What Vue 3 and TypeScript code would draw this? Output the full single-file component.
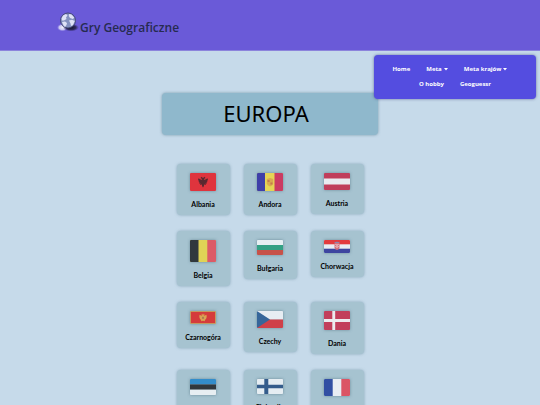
<script setup lang="ts">
interface Country {
  name: string
  code: string
  height: number
}

interface MenuLink {
  label: string
  dropdown?: boolean
}

const menu: MenuLink[][] = [
  [{ label: 'Home' }, { label: 'Meta', dropdown: true }, { label: 'Meta krajów', dropdown: true }],
  [{ label: 'O hobby' }, { label: 'Geoguessr' }],
]

const countries: Country[] = [
  { name: 'Albania', code: 'al', height: 18 },
  { name: 'Andora', code: 'ad', height: 18 },
  { name: 'Austria', code: 'at', height: 17 },
  { name: 'Belgia', code: 'be', height: 22 },
  { name: 'Bułgaria', code: 'bg', height: 15 },
  { name: 'Chorwacja', code: 'hr', height: 13 },
  { name: 'Czarnogóra', code: 'me', height: 13 },
  { name: 'Czechy', code: 'cz', height: 17 },
  { name: 'Dania', code: 'dk', height: 19 },
  { name: 'Estonia', code: 'ee', height: 16 },
  { name: 'Finlandia', code: 'fi', height: 15 },
  { name: 'Francja', code: 'fr', height: 17 },
]
</script>

<template>
  <div class="page">
    <header class="header">
      <a class="brand" href="#">
        <svg class="globe" viewBox="0 0 22 20" aria-hidden="true">
          <defs>
            <radialGradient id="globe-shadow">
              <stop offset="0" stop-color="#11112a" />
              <stop offset="0.6" stop-color="#25224a" stop-opacity="0.85" />
              <stop offset="1" stop-color="#3c3580" stop-opacity="0" />
            </radialGradient>
            <radialGradient id="globe-glow">
              <stop offset="0" stop-color="#f2f2fc" />
              <stop offset="0.6" stop-color="#d5d3f5" stop-opacity="0.9" />
              <stop offset="1" stop-color="#a9a2ea" stop-opacity="0" />
            </radialGradient>
          </defs>
          <ellipse cx="5.500" cy="15.500" rx="5.500" ry="3.800" fill="url(#globe-glow)" />
          <ellipse cx="14" cy="15.500" rx="8" ry="4" fill="url(#globe-shadow)" />
          <circle cx="11" cy="8.500" r="7.500" fill="#8491c0" stroke="#3a3c66" stroke-width="0.800" />
          <path d="M4.500 6.500 L6 3.500 L9 2 L10.500 3.500 L9 5.500 L9.500 7 L7 8.500 L5 8.500Z M5 10 L8 9.500 L10 11 L9.500 13 L8 15 L6.500 13.500Z M12 2 L14.500 2.500 L17.200 5.500 L16 7 L13 6 L11.800 4Z M12 8.500 L15 7.800 L17.800 9 L16 13 L14 14 L13.500 11.500Z" fill="#dfe2f6" />
        </svg>
        <span>Gry Geograficzne</span>
      </a>
    </header>

    <nav class="menu" aria-label="Menu">
      <div v-for="(row, i) in menu" :key="i" class="menu-row">
        <a v-for="link in row" :key="link.label" href="#" class="menu-link">
          {{ link.label }}<svg v-if="link.dropdown" class="caret" viewBox="0 0 4 3" aria-hidden="true"><path d="M0 0H4L2 2.500Z" /></svg>
        </a>
      </div>
    </nav>

    <main class="content">
      <h1 class="title">EUROPA</h1>
      <div class="grid">
        <a v-for="c in countries" :key="c.code" href="#" class="card">
          <svg class="flag" :viewBox="`0 0 26 ${c.height}`" :style="{ height: `${c.height}px` }" aria-hidden="true">
            <template v-if="c.code === 'al'">
              <rect width="26" height="18" fill="#df343d" />
              <path d="M13 5 L11.500 3.800 L10.500 5 L12 6 L11.500 7 L8.500 5.300 L8 7 L9 8 L8.500 9 L9.500 9.300 L9 10.500 L10.500 10.500 L10 12 L12 11.500 L12 13 L13 14.500 L14 13 L14 11.500 L16 12 L15.500 10.500 L17 10.500 L16.500 9.300 L17.500 9 L17 8 L18 7 L17.500 5.300 L14.500 7 L14 6 L15.500 5 L14.500 3.800Z" fill="#5a2930" />
            </template>
            <template v-else-if="c.code === 'ad'">
              <rect width="26" height="18" fill="#e5d455" />
              <rect width="8" height="18" fill="#3f3fa8" />
              <rect x="17.500" width="8.500" height="18" fill="#cb3b62" />
              <path d="M9.800 6 L13 5 L16.200 6 V10.500 Q16 12.500 13 13.500 Q10 12.500 9.800 10.500Z" fill="#d9a94f" />
              <path d="M10.500 7H12.600V9H10.500Z M13.400 9.500H15.500V11.500H13.400Z" fill="#c37c4c" />
            </template>
            <template v-else-if="c.code === 'at'">
              <rect width="26" height="17" fill="#c03e5b" />
              <rect y="5.500" width="26" height="6" fill="#e9ebf0" />
            </template>
            <template v-else-if="c.code === 'be'">
              <rect width="26" height="22" fill="#e0d356" />
              <rect width="8.500" height="22" fill="#30383d" />
              <rect x="17.300" width="8.700" height="22" fill="#dc5b67" />
            </template>
            <template v-else-if="c.code === 'bg'">
              <rect width="26" height="5" fill="#e6eff2" />
              <rect y="5" width="26" height="5" fill="#33a184" />
              <rect y="10" width="26" height="5" fill="#c75249" />
            </template>
            <template v-else-if="c.code === 'hr'">
              <rect width="26" height="13" fill="#e9edf3" />
              <rect width="26" height="4.300" fill="#e33b3e" />
              <rect y="8.700" width="26" height="4.300" fill="#3d45a0" />
              <path d="M10.500 3H15.500V8Q15.200 9.600 13 10Q10.800 9.600 10.500 8Z" fill="#d3707b" />
              <path d="M11.500 4H12.500V5H11.500Z M13.500 4H14.500V5H13.500Z M12.500 5H13.500V6H12.500Z M11.500 6H12.500V7H11.500Z M13.500 6H14.500V7H13.500Z M12.500 7H13.500V8H12.500Z" fill="#f0d7dc" />
              <path d="M10.500 3L10.800 1.700L12 2.200L13 1.500L14 2.200L15.200 1.700L15.500 3Z" fill="#8b88b4" />
            </template>
            <template v-else-if="c.code === 'me'">
              <rect width="26" height="13" fill="#c49a60" />
              <rect x="1" y="1" width="24" height="11" fill="#d53b3b" />
              <path d="M13 4 L12 2.500 L11.500 4 L12.300 5 L9.500 3.800 L9.300 6 L10 8 L11.200 9 L11 10.300 L13 9.800 L15 10.300 L14.800 9 L16 8 L16.700 6 L16.500 3.800 L13.700 5 L14.500 4 L14 2.500Z" fill="#d9a352" />
              <rect x="12.300" y="5.800" width="1.400" height="2" fill="#9a6a54" />
            </template>
            <template v-else-if="c.code === 'cz'">
              <rect width="26" height="8.500" fill="#e7edf3" />
              <rect y="8.500" width="26" height="8.500" fill="#cf4049" />
              <path d="M0 0L13 8.500L0 17Z" fill="#36669a" />
            </template>
            <template v-else-if="c.code === 'dk'">
              <rect width="26" height="19" fill="#c23e5b" />
              <path d="M8.300 0H11.200V8H26V11H11.200V19H8.300V11H0V8H8.300Z" fill="#ecebef" />
            </template>
            <template v-else-if="c.code === 'ee'">
              <rect width="26" height="5.400" fill="#338dca" />
              <rect y="5.400" width="26" height="5.300" fill="#30383d" />
              <rect y="10.700" width="26" height="5.300" fill="#e7eef2" />
            </template>
            <template v-else-if="c.code === 'fi'">
              <rect width="26" height="15" fill="#e5edf2" />
              <path d="M7.300 0H11.300V5.800H26V9.200H11.300V15H7.300V9.200H0V5.800H7.300Z" fill="#345c8b" />
            </template>
            <template v-else>
              <rect width="26" height="17" fill="#e8edf3" />
              <rect width="8.700" height="17" fill="#314fa3" />
              <rect x="17.300" width="8.700" height="17" fill="#db5565" />
            </template>
          </svg>
          <span class="name">{{ c.name }}</span>
        </a>
      </div>
    </main>
  </div>
</template>

<style>
body {
  background: #c6daea;
}
</style>

<style scoped>
.page {
  position: relative;
  font-family: "Noto Sans", "Open Sans", sans-serif;
  color: #000;
}

a {
  color: inherit;
  text-decoration: none;
}

.header {
  box-sizing: border-box;
  height: 51px;
  padding: 12px 57px 0;
  background: #6a5ad8;
  border-bottom: 1px solid #8c84dc;
}

.brand {
  display: inline-flex;
  align-items: flex-start;
  gap: 1px;
  font-family: "Open Sans", sans-serif;
  font-size: 12px;
  font-weight: 600;
  line-height: 32px;
  color: #262b50;
}

.globe {
  width: 22px;
  height: 20px;
}

.menu {
  position: absolute;
  top: 55px;
  right: 4px;
  box-sizing: border-box;
  width: 30%;
  padding: 7px 0;
  border-radius: 4px;
  background: #544de0;
  box-shadow: 0 0 3px rgba(40, 40, 110, 0.6);
  color: #fff;
  font-family: "Open Sans", sans-serif;
  font-size: 6px;
  font-weight: 700;
  line-height: 15px;
}

.menu-row {
  display: flex;
  justify-content: center;
  gap: 16px;
}

.menu-row:first-child {
  padding-right: 10px;
}

.menu-link {
  display: flex;
  align-items: center;
  gap: 2px;
}

.caret {
  width: 4px;
  height: 3px;
  fill: currentColor;
}

.content {
  display: flex;
  flex-direction: column;
  align-items: center;
  padding: 42px 0 16px;
}

.title {
  box-sizing: border-box;
  width: 40%;
  margin: 0 0 29px;
  padding: 0 8px 2px 0;
  border-radius: 4px;
  background: #8fb8cc;
  box-shadow: 0 0 3px rgba(70, 110, 130, 0.6);
  font-size: 22px;
  font-weight: 400;
  line-height: 40px;
  text-align: center;
}

.grid {
  display: grid;
  grid-template-columns: repeat(3, 53px);
  align-items: start;
  gap: 16px 14px;
}

.card {
  display: flex;
  flex-direction: column;
  align-items: center;
  padding: 9px 0 6px;
  border-radius: 4px;
  background: #a6c3d0;
  box-shadow: 0 0 3px rgba(90, 130, 150, 0.6);
}

.flag {
  width: 26px;
  border-radius: 1px;
  box-shadow: 0 0 3px rgba(70, 100, 115, 0.6);
}

.name {
  margin-top: 8px;
  font-family: Lato, "Open Sans", sans-serif;
  font-size: 7px;
  font-weight: 700;
  line-height: 10px;
}
</style>
